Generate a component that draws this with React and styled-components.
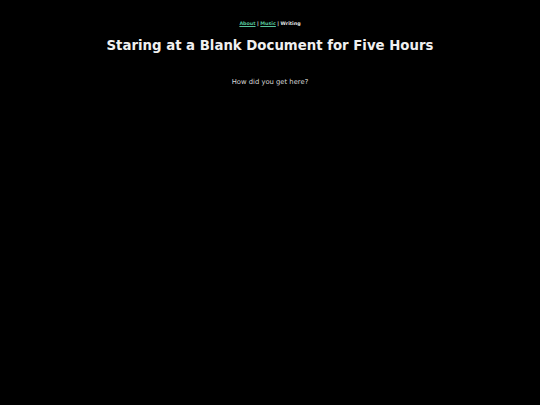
import React from 'react'
import styled, { createGlobalStyle } from 'styled-components'

const GlobalStyle = createGlobalStyle`
    html, body {
        margin: 0;
        padding: 0;
        background: #000;
    }

    body {
        font-family: "DejaVu Sans", Verdana, sans-serif;
        color: #e6e6e6;
    }
`

const Page = styled.div`
    min-height: 405px;
    background: #000;
    display: flex;
    flex-direction: column;
    align-items: center;
    padding-top: 20px;
    box-sizing: border-box;
`

const Nav = styled.nav`
    font-size: 4.8px;
    font-weight: bold;
    line-height: 7px;
    color: #e6e6e6;
`

const NavLink = styled.a`
    color: ${props => props.current ? '#e6e6e6' : '#55c59a'};
    text-decoration: ${props => props.current ? 'none' : 'underline'};
`

const Sep = styled.span`
    margin: 0 1.5px;
`

const Title = styled.h1`
    margin: 9px 0 0;
    font-size: 13.3px;
    line-height: 20px;
    font-weight: bold;
    color: #f0f0f0;
`

const Lead = styled.p`
    margin: 21px 0 0;
    font-size: 6.8px;
    line-height: 10px;
    color: #d8d8d8;
`

export default function App() {
    return (
        <>
            <GlobalStyle />
            <Page>
                <Nav>
                    <NavLink href="#about">About</NavLink>
                    <Sep>|</Sep>
                    <NavLink href="#music">Music</NavLink>
                    <Sep>|</Sep>
                    <NavLink current>Writing</NavLink>
                </Nav>
                <Title>Staring at a Blank Document for Five Hours</Title>
                <Lead>How did you get here?</Lead>
            </Page>
        </>
    )
}
